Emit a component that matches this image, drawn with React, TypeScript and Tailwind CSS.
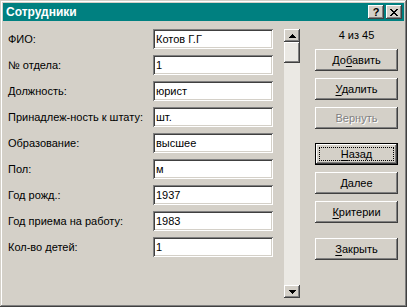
import React from "react";

const raised =
  "shadow-[inset_-1px_-1px_#404040,inset_1px_1px_#ffffff,inset_-2px_-2px_#808080,inset_2px_2px_#d4d0c8]";
const sunken =
  "shadow-[inset_1px_1px_#808080,inset_-1px_-1px_#ffffff,inset_2px_2px_#404040,inset_-2px_-2px_#d4d0c8]";

const rows: [string, string][] = [
  ["ФИО:", "Котов Г.Г"],
  ["№ отдела:", "1"],
  ["Должность:", "юрист"],
  ["Принадлеж-ность к штату:", "шт."],
  ["Образование:", "высшее"],
  ["Пол:", "м"],
  ["Год рожд.:", "1937"],
  ["Год приема на работу:", "1983"],
  ["Кол-во детей:", "1"],
];

function Btn({
  pre,
  u,
  post,
  className = "",
  disabled = false,
  def = false,
}: {
  pre: string;
  u: string;
  post: string;
  className?: string;
  disabled?: boolean;
  def?: boolean;
}) {
  const label = (
    <span
      className={
        disabled
          ? "text-[#808080] [text-shadow:1px_1px_0_#ffffff]"
          : "text-black"
      }
    >
      {pre}
      <span className="underline underline-offset-[2px]">{u}</span>
      {post}
    </span>
  );
  if (def) {
    return (
      <div className={`h-[22px] w-[83px] border border-black ${className}`}>
        <div
          className={`h-full w-full bg-[#d4d0c8] ${raised} flex items-center justify-center p-[3px]`}
        >
          <div className="h-full w-full border border-dotted border-black flex items-center justify-center">
            {label}
          </div>
        </div>
      </div>
    );
  }
  return (
    <div
      className={`h-[22px] w-[83px] bg-[#d4d0c8] ${raised} flex items-center justify-center ${className}`}
    >
      {label}
    </div>
  );
}

export default function App() {
  return (
    <div
      className="w-[407px] h-[307px] bg-[#d4d0c8] shadow-[inset_-1px_-1px_#404040,inset_1px_1px_#d4d0c8,inset_-2px_-2px_#808080,inset_2px_2px_#ffffff] p-[3px] flex flex-col text-[11px] leading-[13px] text-black"
      style={{ fontFamily: '"Liberation Sans", Arial, sans-serif' }}
    >
      {/* Title bar */}
      <div className="h-[18px] bg-[#008080] flex items-center pl-[3px] pr-[2px]">
        <span className="text-white font-bold text-[12px] leading-[14px]">
          Сотрудники
        </span>
        <div className="ml-auto flex gap-[2px]">
          <div
            className={`w-[16px] h-[14px] bg-[#d4d0c8] ${raised} flex items-center justify-center`}
          >
            <span className="font-bold text-[11px] leading-[11px] text-black mt-[1px]">
              ?
            </span>
          </div>
          <div
            className={`w-[16px] h-[14px] bg-[#d4d0c8] ${raised} flex items-center justify-center`}
          >
            <svg width="8" height="7" viewBox="0 0 8 7" shapeRendering="crispEdges">
              <path
                d="M0 0h2v1h-2zM6 0h2v1h-2zM1 1h2v1h-2zM5 1h2v1h-2zM2 2h4v1h-4zM3 3h2v1h-2zM2 4h4v1h-4zM1 5h2v1h-2zM5 5h2v1h-2zM0 6h2v1h-2zM6 6h2v1h-2z"
                fill="#000"
              />
            </svg>
          </div>
        </div>
      </div>

      {/* Body */}
      <div className="flex flex-1">
        {/* Fields */}
        <div className="pl-[5px] pt-[8px] flex flex-col gap-[6px]">
          {rows.map(([label, value]) => (
            <div key={label} className="flex items-center h-[20px]">
              <div className="w-[145px] whitespace-nowrap">{label}</div>
              <div
                className={`w-[120px] h-[20px] bg-white ${sunken} flex items-center pl-[3px] whitespace-nowrap`}
              >
                {value}
              </div>
            </div>
          ))}
        </div>

        {/* Scrollbar */}
        <div className="ml-[11px] mt-[8px] w-[16px] h-[269px] bg-[#ebe9e4] flex flex-col">
          <div
            className={`w-[16px] h-[13px] bg-[#d4d0c8] ${raised} flex items-center justify-center`}
          >
            <svg width="7" height="4" viewBox="0 0 7 4" shapeRendering="crispEdges">
              <path d="M3 0h1v1h-1zM2 1h3v1h-3zM1 2h5v1h-5zM0 3h7v1h-7z" fill="#000" />
            </svg>
          </div>
          <div
            className={`w-[16px] h-[21px] bg-[#ebe9e4] shadow-[inset_-1px_-1px_#404040,inset_1px_1px_#ffffff,inset_-2px_-2px_#808080]`}
          />
          <div className="flex-1" />
          <div
            className={`w-[16px] h-[13px] bg-[#d4d0c8] ${raised} flex items-center justify-center`}
          >
            <svg width="7" height="4" viewBox="0 0 7 4" shapeRendering="crispEdges">
              <path d="M0 0h7v1h-7zM1 1h5v1h-5zM2 2h3v1h-3zM3 3h1v1h-1z" fill="#000" />
            </svg>
          </div>
        </div>

        {/* Buttons */}
        <div className="ml-[15px] w-[83px] pt-[8px] flex flex-col">
          <div className="h-[13px] text-center">4 из 45</div>
          <Btn pre="До" u="б" post="авить" className="mt-[7px]" />
          <Btn pre="" u="У" post="далить" className="mt-[7px]" />
          <Btn pre="Вернуть" u="" post="" className="mt-[7px]" disabled />
          <Btn pre="" u="Н" post="азад" className="mt-[14px]" def />
          <Btn pre="" u="Д" post="алее" className="mt-[7px]" />
          <Btn pre="" u="К" post="ритерии" className="mt-[7px]" />
          <Btn pre="" u="З" post="акрыть" className="mt-[15px]" />
        </div>
      </div>
    </div>
  );
}
